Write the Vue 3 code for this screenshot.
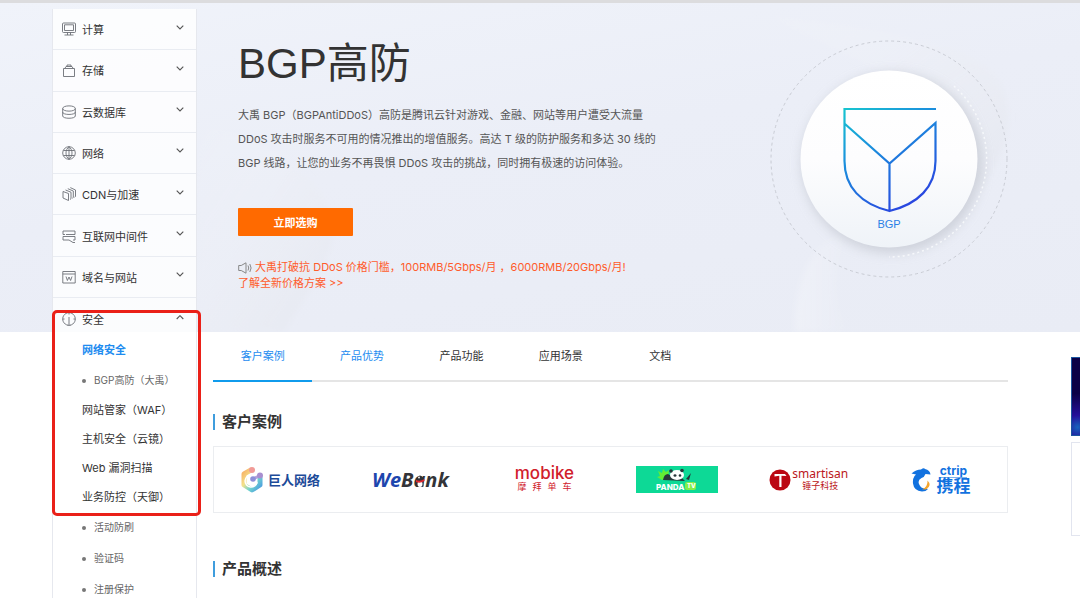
<script setup>
const menu = [
  { name: '计算', d: 'M1.5 1h11q1 0 1 1v7.500q0 1-1 1h-11q-1 0-1-1V2q0-1 1-1zM2.500 2.800h9v5.700h-9zM5.500 10.500v2.500M8.500 10.500v2.500M2.500 13h9' },
  { name: '存储', d: 'M1.500 5.500h11v8h-11zM2.800 5.500L4 3.500h6l1.200 2M5 3.500V2h4v1.500' },
  { name: '云数据库', d: 'M.7 3.500c0-3.500 12.600-3.500 12.600 0s-12.600 3.500-12.600 0v7.500c0 3 12.600 3 12.600 0V3.500M.7 7.200c0 3 12.600 3 12.600 0' },
  { name: '网络', d: 'M7 .7a6.300 6.300 0 1 0 0 12.600A6.300 6.300 0 1 0 7 .7zM7 .7c-4 3-4 9.600 0 12.600M7 .7c4 3 4 9.600 0 12.600M7 .7v12.600M1.400 4.500h11.200M1.400 9.500h11.200' },
  { name: 'CDN与加速', d: 'M1 4.500l5.500 2v7L1 11zM3.500 3L9 5.200v6.500l-1 .8M5.800 1.700L11.300 4v6.500l-1 .7M8.300.6L13.500 3v6.500l-1 .7' },
  { name: '互联网中间件', d: 'M3 5.500H1V2h12v3.500H4M1 8.500v-1h12v3.500h-2M1 8.500V11h6l4 2.500h2' },
  { name: '域名与网站', d: 'M.8 1.500h12.400v11.500H.8zM.8 4h12.400M4 6.500l1.400 4L7 7l1.600 3.500 1.400-4' }
]
const securityIcon = 'M6 13.200A6.300 6.300 0 1 1 8 13.200M7 5v8.500M7 .7v1.800M.7 7h1.800M11.500 7h1.800M5.500 13.300h3'
const security = [
  { name: '网络安全', kind: 'current' },
  { name: 'BGP高防（大禹）', kind: 'leaf' },
  { name: '网站管家（WAF）', kind: '' },
  { name: '主机安全（云镜）', kind: '' },
  { name: 'Web 漏洞扫描', kind: '' },
  { name: '业务防控（天御）', kind: '' },
  { name: '活动防刷', kind: 'leaf' },
  { name: '验证码', kind: 'leaf' },
  { name: '注册保护', kind: 'leaf' }
]
const tabs = [
  { name: '客户案例', kind: 'active' },
  { name: '产品优势', kind: 'hover' },
  { name: '产品功能', kind: '' },
  { name: '应用场景', kind: '' },
  { name: '文档', kind: '' }
]
</script>

<template>
  <div class="page">
    <div class="backdrop">
      <svg viewBox="0 0 1080 332" preserveAspectRatio="none" aria-hidden="true">
        <defs>
          <linearGradient id="fold" x1="0" y1="0" x2="1" y2="1">
            <stop offset="0" stop-color="#fff" stop-opacity="0" />
            <stop offset="1" stop-color="#dde0e8" stop-opacity=".45" />
          </linearGradient>
          <linearGradient id="sheen" x1="0" y1="0" x2="1" y2="0">
            <stop offset="0" stop-color="#fff" stop-opacity=".25" />
            <stop offset="1" stop-color="#fff" stop-opacity="0" />
          </linearGradient>
          <filter id="haze"><feGaussianBlur stdDeviation="3" /></filter>
        </defs>
        <g filter="url(#haze)">
          <path d="M197 120C270 140 320 170 334 222C336 260 300 300 285 332H197z" fill="url(#fold)" />
          <path d="M740 0C800 30 960 20 1000 80C1020 120 1000 160 980 190C960 90 860 60 740 0z" fill="url(#fold)" />
          <path d="M795 332C795 280 810 240 850 230C830 270 830 300 850 332z" fill="url(#sheen)" />
        </g>
      </svg>
    </div>

    <nav class="sidebar" aria-label="产品">
      <div class="groups">
        <button v-for="m in menu" :key="m.name" class="group" type="button">
          <svg class="icon" viewBox="0 0 14 14" aria-hidden="true"><path :d="m.d" /></svg>
          <span>{{ m.name }}</span>
          <svg class="chevron" viewBox="0 0 8 5" aria-hidden="true"><path d="M.7.7L4 4L7.300.7" /></svg>
        </button>
      </div>
      <div class="security">
        <button class="group open" type="button">
          <svg class="icon" viewBox="0 0 14 14" aria-hidden="true"><path :d="securityIcon" /></svg>
          <span>安全</span>
          <svg class="chevron" viewBox="0 0 8 5" aria-hidden="true"><path d="M.7 4L4 .7L7.300 4" /></svg>
        </button>
        <a v-for="s in security" :key="s.name" href="#" class="sub" :class="s.kind">{{ s.name }}</a>
        <div class="marker"></div>
      </div>
    </nav>

    <header class="hero">
      <div class="intro">
        <h1>BGP高防</h1>
        <p class="desc">大禹 BGP（BGPAntiDDoS）高防是腾讯云针对游戏、金融、网站等用户遭受大流量<br>DDoS 攻击时服务不可用的情况推出的增值服务。高达 T 级的防护服务和多达 30 线的<br>BGP 线路，让您的业务不再畏惧 DDoS 攻击的挑战，同时拥有极速的访问体验。</p>
        <button class="buy" type="button">立即选购</button>
        <a class="notice" href="#">
          <svg viewBox="0 0 14 12" aria-hidden="true"><path d="M.7 3.500h2.500L8 .8v10.400L3.200 8.500H.7zM10 3.500q1.500 2.500 0 5M11.800 2q2.600 4 0 8" /></svg>
          大禹打破抗 DDoS 价格门槛，100RMB/5Gbps/月 ，6000RMB/20Gbps/月!<br>了解全新价格方案 &gt;&gt;
        </a>
      </div>
      <svg class="emblem" viewBox="0 0 238 238" role="img" aria-label="BGP">
        <defs>
          <linearGradient id="disc" x1="0" y1="0" x2="0" y2="1">
            <stop offset="0" stop-color="#fff" />
            <stop offset=".5" stop-color="#fdfdfe" />
            <stop offset="1" stop-color="#eff3f8" />
          </linearGradient>
          <linearGradient id="shield" gradientUnits="userSpaceOnUse" x1="74" y1="68" x2="140" y2="172">
            <stop offset="0" stop-color="#17c5cf" />
            <stop offset=".35" stop-color="#1a94dc" />
            <stop offset="1" stop-color="#2a3fe0" />
          </linearGradient>
          <filter id="soft" x="-20%" y="-20%" width="140%" height="140%"><feGaussianBlur stdDeviation="6" /></filter>
        </defs>
        <circle cx="119" cy="119" r="118" fill="none" stroke="#c9ccd4" stroke-dasharray="3 3" />
        <circle cx="122" cy="123" r="90" fill="#bfc3cc" opacity=".65" filter="url(#soft)" />
        <path d="M184 46A98 98 0 0 1 119 217" fill="none" stroke="#f6f8fb" stroke-width="1.500" stroke-dasharray="2 3" />
        <circle cx="119" cy="119" r="88.500" fill="url(#disc)" />
        <path d="M166 69H74.500V121C74.500 147 91 164 119.500 171C148 164 165.500 147 165.500 121V83L119.500 123.500L75 84M119.500 123.500V171" fill="none" stroke="url(#shield)" stroke-width="2.200" />
        <text x="119" y="188" text-anchor="middle" class="emblem-label">BGP</text>
      </svg>
    </header>

    <main class="content">
      <nav class="tabs" aria-label="页面内容">
        <a v-for="t in tabs" :key="t.name" href="#" :class="t.kind">{{ t.name }}</a>
      </nav>
      <h2>客户案例</h2>
      <div class="clients">
        <div class="client">
          <svg class="giant-mark" viewBox="0 0 24 28" aria-hidden="true">
            <defs>
              <linearGradient id="giant" x1="0" y1="0" x2="1" y2="1">
                <stop offset="0" stop-color="#f7b267" />
                <stop offset=".35" stop-color="#f4e28a" />
                <stop offset=".65" stop-color="#6fd3cf" />
                <stop offset="1" stop-color="#4b9be0" />
              </linearGradient>
            </defs>
            <path d="M11 4L4 8V19L12 24L20 19V12" fill="none" stroke="url(#giant)" stroke-width="5" stroke-linejoin="round" stroke-linecap="round" />
            <path d="M11 9a6 6 0 1 0 6 7" fill="none" stroke="#fff" stroke-width="1.500" />
            <path d="M13 13L20 9.500" stroke="#b3a2dc" stroke-width="3" />
            <circle cx="12" cy="4" r="3" fill="#f19a97" />
            <circle cx="20" cy="9.500" r="3" fill="#a88fd0" />
            <circle cx="13" cy="13" r="2.800" fill="#8d8fd8" />
          </svg>
          <span class="giant">巨人网络</span>
        </div>
        <div class="client">
          <svg class="webank" viewBox="0 0 86 28" role="img" aria-label="WeBank">
            <text x="3" y="21"><tspan fill="#1d46ae">We</tspan><tspan fill="#333438">Bank</tspan></text>
            <path d="M47.500 12.500q3.500-6 7 0v8h-7z" fill="#303136" />
            <ellipse cx="51" cy="18" rx="2.500" ry="3" fill="#fff" />
            <circle cx="50" cy="11.500" r=".9" fill="#fff" />
            <path d="M47 14q4 2 8.500-1v2q-4.500 3-8.500 1z" fill="#e12a2f" />
          </svg>
        </div>
        <div class="client mobike">
          <strong>mobike</strong>
          <span><i>摩</i><i>拜</i><i>单</i><i>车</i></span>
        </div>
        <div class="client">
          <svg class="panda" viewBox="0 0 82 27" role="img" aria-label="PANDA.TV">
            <rect width="82" height="27" fill="#0dd996" />
            <path d="M22 5l4 2 1-4 3 3 3-2-1 8-6 2-5-3 3-1z" fill="#62ed35" />
            <path d="M27 14q1-6 5-6l5 3 9 1 3 3z" fill="#27373a" />
            <ellipse cx="41" cy="9" rx="7" ry="5" fill="#fff" />
            <circle cx="35" cy="5" r="1.800" fill="#27373a" />
            <circle cx="46" cy="4.500" r="1.800" fill="#27373a" />
            <ellipse cx="39" cy="9.500" rx="1.500" ry="1.200" fill="#27373a" />
            <ellipse cx="44" cy="9.500" rx="1.300" ry="1.200" fill="#27373a" />
            <path d="M50 13l5-6-2 7z" fill="#27373a" />
            <text x="20" y="24" fill="#fff">PANDA</text>
            <rect x="49" y="16" width="11" height="8" rx="2" fill="#83ef49" />
            <text x="51" y="22" fill="#fff" class="tv">TV</text>
          </svg>
        </div>
        <div class="client smartisan">
          <svg viewBox="0 0 22 22" aria-hidden="true">
            <circle cx="11" cy="11" r="10.500" fill="#bb0713" />
            <path d="M5.500 7.500V5H16l1.500 2-5-.3V18h-2.200V6.700z" fill="#fff" />
          </svg>
          <div><strong>smartisan</strong><span>锤子科技</span></div>
        </div>
        <div class="client ctrip">
          <svg viewBox="0 0 22 24" aria-hidden="true">
            <path d="M.5 5.500Q5 1.500 10 1.500Q13-.5 14 1q5 1 5.500 5.500l-5-.5q-1 3-4 4-4 2-2.500 6 2 5 7 4.500l2 .5q-2 2.500-6 2.500-8-.5-9-8Q1.500 11 3.500 8L5 6.500z" fill="#1272df" />
            <path d="M16.500 12.500q5 5-1.500 9l-4-.2q6-2.300 5.500-8.800z" fill="#f6a42b" />
          </svg>
          <div><strong>ctrip</strong><span>携程</span></div>
        </div>
      </div>
      <h2 class="overview">产品概述</h2>
    </main>

    <aside class="rail" aria-hidden="true">
      <div class="banner"></div>
      <div class="card"></div>
    </aside>
  </div>
</template>

<style>
html,
body {
  background: #fff;
}
</style>

<style scoped>
.page {
  display: grid;
  grid-template-columns: 52px 145px minmax(0, 1fr) 9px;
  grid-template-rows: 332px auto;
  height: 100vh;
  overflow: hidden;
  color: #333;
  font-family: Inter, "Noto Sans CJK SC", sans-serif;
  font-size: 11px;
}
.page * {
  box-sizing: border-box;
}
button {
  border: 0;
  padding: 0;
  background: none;
  font: inherit;
  color: inherit;
}
a {
  color: inherit;
  text-decoration: none;
}
.backdrop {
  grid-area: 1 / 1 / 2 / -1;
  border-top: 3px solid #dcdcde;
  background: linear-gradient(170deg, #f0f3fa 0%, #ebeef7 45%, #e9ecf5 100%);
  overflow: hidden;
}
.backdrop svg {
  display: block;
  width: 100%;
  height: 100%;
}
.sidebar {
  grid-area: 1 / 2 / 3 / 3;
  margin-top: 9px;
  border: solid #e6e8ee;
  border-width: 0 1px;
  background: rgba(255, 255, 255, 0.8);
}
.groups {
  display: grid;
  grid-auto-rows: 1fr;
  min-height: 289px;
}
.group {
  display: flex;
  align-items: center;
  gap: 6px;
  width: 100%;
  padding: 0 12px 0 9px;
  border-bottom: 1px solid #e9ecf2;
  text-align: left;
}
.group.open {
  height: 38px;
  padding-top: 4px;
  border-bottom: 0;
}
.icon {
  width: 14px;
  height: 14px;
  fill: none;
  stroke: #6c6f76;
  stroke-width: 0.9;
}
.chevron {
  width: 8px;
  height: 5px;
  margin: 0 0 4px auto;
  fill: none;
  stroke: #555;
  stroke-width: 1.1;
}
.security {
  position: relative;
}
.sub {
  display: block;
  height: 29px;
  padding-left: 29px;
  line-height: 29px;
  white-space: nowrap;
}
.sub.current {
  color: #1e8cf0;
  font-weight: 700;
}
.sub.leaf {
  display: flex;
  align-items: center;
  gap: 8px;
  height: 31px;
  color: #666;
  font-size: 10px;
}
.sub.leaf::before {
  content: "";
  width: 4px;
  height: 4px;
  border-radius: 50%;
  background: #777;
}
.marker {
  position: absolute;
  top: 12px;
  left: -1px;
  width: 149px;
  height: 206px;
  border: 3px solid #ea2018;
  border-radius: 5px;
  pointer-events: none;
}
.hero {
  grid-area: 1 / 3 / 2 / 4;
  display: flex;
  justify-content: space-between;
  margin: 0 63px 0 41px;
}
h1 {
  margin: 32px 0 0;
  font-family: "Liberation Sans", "Noto Sans CJK SC", sans-serif;
  font-size: 42px;
  font-weight: 400;
  line-height: 64px;
}
.desc {
  margin: 7px 0 0;
  color: #555;
  line-height: 24px;
  white-space: nowrap;
}
.buy {
  display: block;
  width: 115px;
  height: 28px;
  margin-top: 33px;
  border-radius: 1px;
  background: #ff6a00;
  color: #fff;
  font-weight: 700;
}
.notice {
  display: block;
  margin-top: 23px;
  color: #ff5c2b;
  line-height: 16px;
  white-space: nowrap;
}
.notice svg {
  width: 14px;
  height: 12px;
  vertical-align: middle;
  fill: none;
  stroke: #888;
}
.emblem {
  flex: none;
  width: 238px;
  height: 238px;
  margin-top: 40px;
}
.emblem-label {
  fill: #2b80e6;
  font-family: "Liberation Sans", sans-serif;
  font-size: 11px;
}
.content {
  grid-area: 2 / 3 / 3 / 4;
  margin: 0 63px 0 16px;
}
.tabs {
  display: grid;
  grid-template-columns: repeat(8, 1fr);
  height: 50px;
  box-shadow: inset 0 -2px #e5e5e5;
}
.tabs a {
  line-height: 48px;
  text-align: center;
}
.tabs .active {
  border-bottom: 2px solid #109bec;
}
.tabs .active,
.tabs .hover {
  color: #1e8cf0;
}
h2 {
  margin: 32px 0 0;
  padding-left: 7px;
  border-left: 2px solid #3f9ddd;
  font-size: 15px;
  font-weight: 700;
  line-height: 16px;
}
.clients {
  display: grid;
  grid-template-columns: repeat(6, 1fr);
  height: 67px;
  margin-top: 16px;
  border: 1px solid #ebedf0;
}
.overview {
  margin-top: 48px;
}
.client {
  display: flex;
  align-items: center;
  justify-content: center;
  line-height: 12px;
}
.giant-mark {
  width: 24px;
  height: 28px;
  margin-right: 4px;
}
.giant {
  color: #1d4b99;
  font-size: 13px;
  font-weight: 700;
}
.webank {
  width: 86px;
  height: 28px;
  font-family: "Open Sans", sans-serif;
  font-size: 20px;
  font-style: italic;
  font-weight: 700;
}
.mobike {
  flex-direction: column;
  color: #d1202b;
}
.mobike strong {
  font-size: 17px;
  font-weight: 500;
  line-height: 15px;
}
.mobike span {
  display: flex;
  gap: 6px;
  font-size: 9px;
}
.mobike i {
  font-style: normal;
}
.panda {
  width: 82px;
  height: 27px;
  font-size: 8px;
  font-weight: 800;
}
.panda .tv {
  font-size: 6px;
}
.smartisan {
  color: #bb1620;
}
.smartisan svg {
  width: 22px;
  height: 22px;
  margin-right: 1px;
}
.smartisan div,
.ctrip div {
  display: flex;
  flex-direction: column;
  align-items: center;
}
.smartisan strong {
  font-family: "Noto Sans", sans-serif;
  font-size: 12px;
  font-weight: 400;
}
.smartisan span {
  font-size: 9px;
}
.ctrip {
  color: #1272df;
}
.ctrip svg {
  width: 22px;
  height: 24px;
  margin-right: 3px;
}
.ctrip strong {
  border-bottom: 1px solid #7fb3ec;
  font-size: 12px;
  font-weight: 700;
  line-height: 12px;
}
.ctrip span {
  font-size: 17px;
  font-weight: 700;
  line-height: 17px;
}
.rail {
  grid-area: 2 / 4 / 3 / 5;
  padding-top: 25px;
}
.banner {
  height: 79px;
  border: solid #1b559f;
  border-width: 1px 0 1px 1px;
  background: radial-gradient(circle at 70% 90%, #1764bd 0, #24109a 12px, #0b0046 34px);
}
.card {
  height: 94px;
  margin-top: 6px;
  border: solid #e2e5ef;
  border-width: 1px 0 1px 1px;
}
</style>
